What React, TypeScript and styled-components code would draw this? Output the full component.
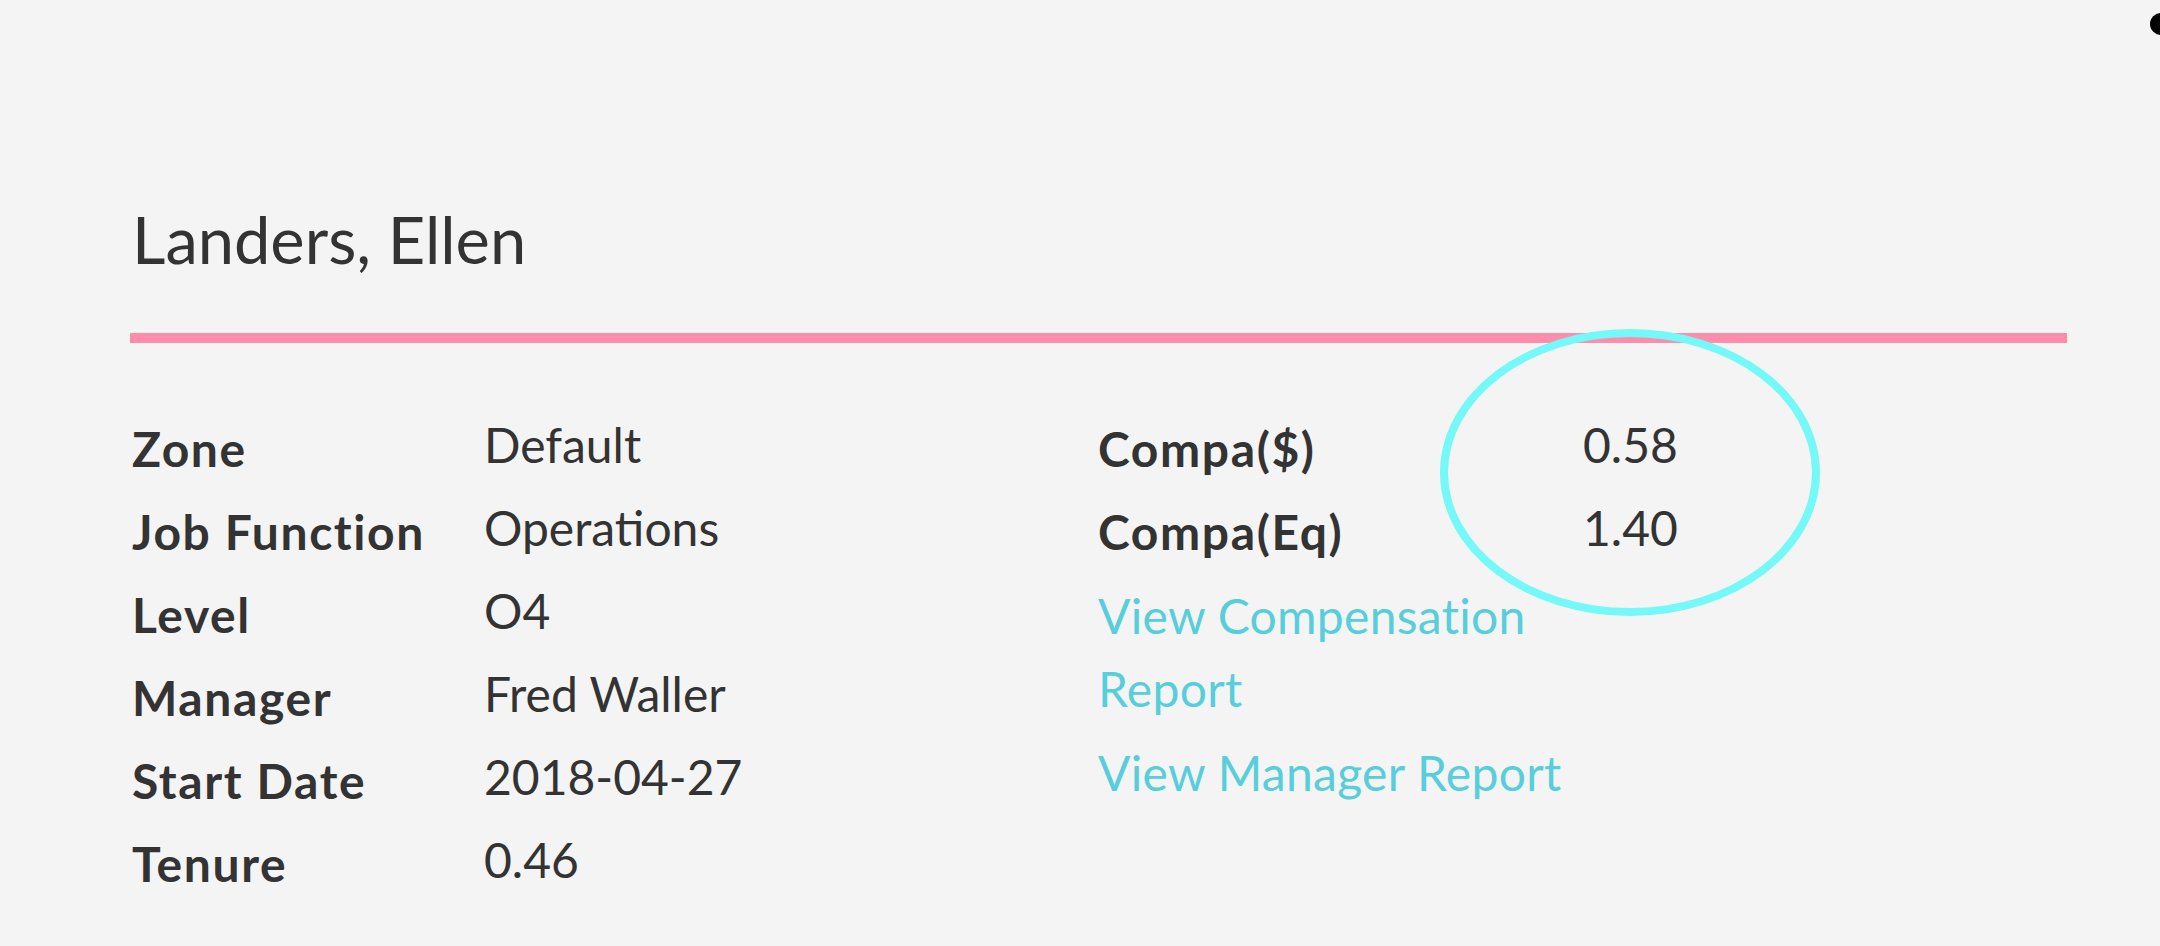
import React from 'react';
import styled, { createGlobalStyle } from 'styled-components';

const GlobalStyle = createGlobalStyle`
  html, body {
    margin: 0;
    padding: 0;
    background: #f4f4f4;
  }

  body {
    font-family: Lato, "Noto Sans", sans-serif;
    color: #333;
  }
`;

const Page = styled.div`
  position: relative;
  width: 2160px;
  height: 946px;
  overflow: hidden;
  box-sizing: border-box;
  padding: 200px 93px 0 130px;
`;

const Name = styled.h1`
  margin: 0;
  font-size: 65px;
  line-height: 79px;
  font-weight: 400;
  color: #333;
  padding-left: 2px;
`;

const Divider = styled.div`
  height: 10px;
  margin-top: 54px;
  background: #fd8dab;
`;

const Columns = styled.div`
  display: grid;
  grid-template-columns: 966px 1fr;
  margin-top: 64px;
  padding-left: 2px;
`;

const Details = styled.dl<{ $labelWidth: number }>`
  position: relative;
  display: grid;
  grid-template-columns: ${(p) => p.$labelWidth}px auto;
  margin: 0;
  font-size: 48px;
  line-height: 83px;
  align-content: start;
`;

const Label = styled.dt`
  font-weight: 700;
  letter-spacing: 1.6px;
  color: #333;
  margin: 0;
`;

const Value = styled.dd`
  margin: 0;
  font-weight: 400;
  color: #333;
  transform: translateY(-4px);
`;

const Highlight = styled.div`
  position: absolute;
  left: 342px;
  top: -78px;
  width: 380px;
  height: 287px;
  box-sizing: border-box;
  border: 8px solid #74f8f8;
  border-radius: 50%;
  pointer-events: none;
`;

const Links = styled.div`
  display: flex;
  flex-direction: column;
  gap: 11px;
  margin-top: 6px;
  max-width: 520px;
`;

const ReportLink = styled.a`
  font-size: 48px;
  line-height: 73px;
  letter-spacing: 0.3px;
  color: #57cedb;
  text-decoration: none;
  cursor: pointer;
`;

const Dot = styled.span`
  position: absolute;
  top: 13px;
  left: 2150px;
  width: 22px;
  height: 22px;
  border-radius: 50%;
  background: #000;
`;

const details = [
  ['Zone', 'Default'],
  ['Job Function', 'Operations'],
  ['Level', 'O4'],
  ['Manager', 'Fred Waller'],
  ['Start Date', '2018-04-27'],
  ['Tenure', '0.46'],
];

const compa = [
  ['Compa($)', '0.58'],
  ['Compa(Eq)', '1.40'],
];

export default function App() {
  return (
    <>
      <GlobalStyle />
      <Page>
        <Dot />
        <Name>Landers, Ellen</Name>
        <Divider />
        <Columns>
          <Details $labelWidth={352}>
            {details.map(([label, value]) => (
              <React.Fragment key={label}>
                <Label>{label}</Label>
                <Value>{value}</Value>
              </React.Fragment>
            ))}
          </Details>
          <div>
            <Details $labelWidth={485}>
              {compa.map(([label, value]) => (
                <React.Fragment key={label}>
                  <Label>{label}</Label>
                  <Value>{value}</Value>
                </React.Fragment>
              ))}
              <Highlight />
            </Details>
            <Links>
              <ReportLink>View Compensation Report</ReportLink>
              <ReportLink>View Manager Report</ReportLink>
            </Links>
          </div>
        </Columns>
      </Page>
    </>
  );
}
